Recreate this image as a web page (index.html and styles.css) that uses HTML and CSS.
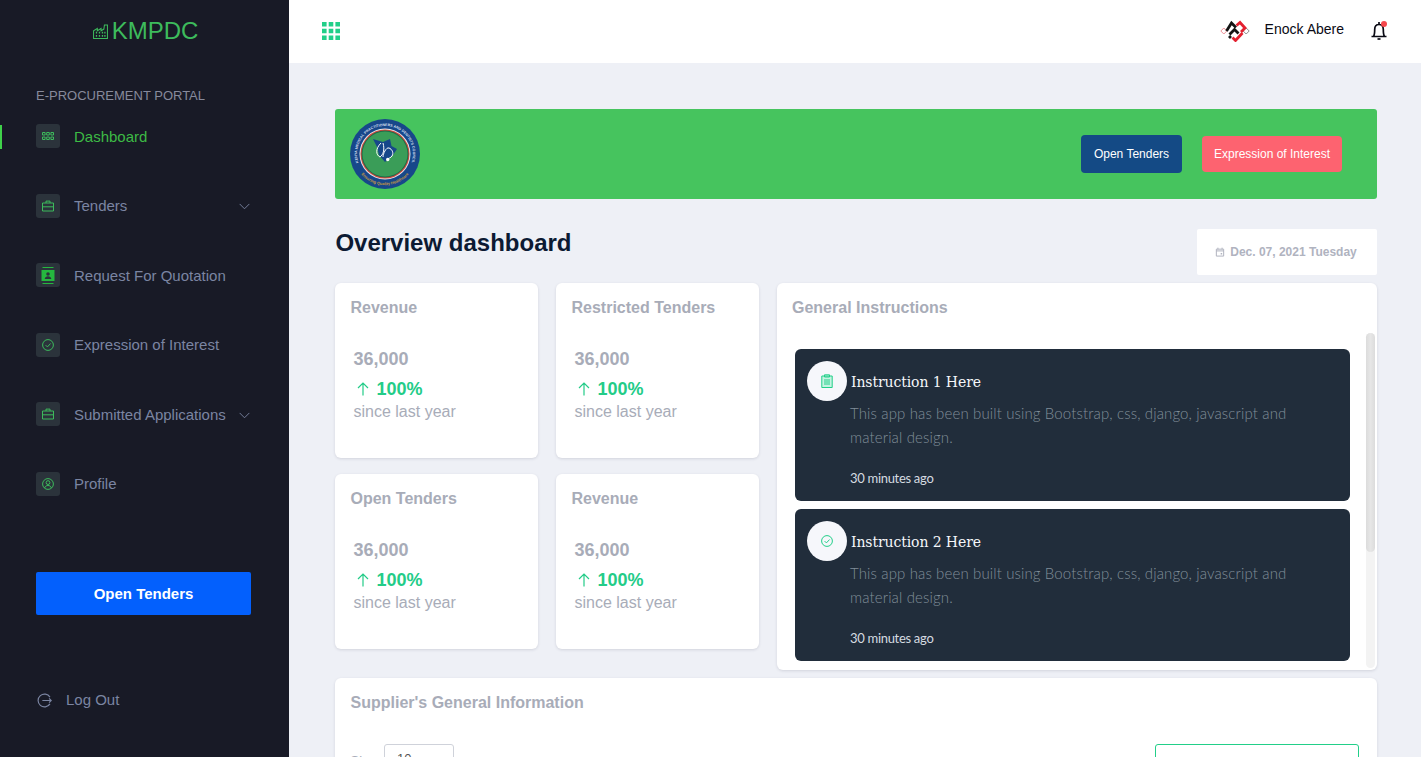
FILE: index.html
```html
<!DOCTYPE html>
<html lang="en">
<head>
<meta charset="utf-8">
<title>KMPDC Dashboard</title>
<link rel="stylesheet" href="styles.css">
</head>
<body>
<div class="app">
  <aside class="sidebar">
    <div class="brand">
      <svg class="brand-icon" viewBox="0 0 16 16" fill="none" stroke="currentColor" stroke-width="1.1"><path d="M.6 15.4V7.2l4-2.4v2.4l4-2.4v2.4l3-1.8.6-4.4h3.2v14.4z"/><path d="M3 9.2h1.4M6.2 9.2h1.4M9.400 9.2h1.4M12 9.2h1.4M3 12.600h1.4M6.2 12.600h1.4M9.400 12.600h1.4M12 12.600h1.4" stroke-width="1.8"/></svg>
      <span>KMPDC</span>
    </div>
    <div class="portal">E-PROCUREMENT PORTAL</div>
    <nav class="nav">
      <a class="nav-item active"><span class="nav-icon"><svg class="ico-dash" viewBox="0 0 12 8" fill="none" stroke="currentColor"><path d="M.5.5h2.600v2.500H.5zM4.700.5h2.600v2.500H4.700zM8.900.5h2.600v2.500H8.900zM.5 5h2.600v2.500H.5zM4.700 5h2.600v2.500H4.700zM8.900 5h2.600v2.500H8.900z"/></svg></span><span class="nav-label">Dashboard</span></a>
      <a class="nav-item"><span class="nav-icon"><svg viewBox="0 0 12 11" fill="none" stroke="currentColor"><path d="M.5 2.500h11v8H.5zM4 2.500V.6h4v1.900M.5 6.300h11"/></svg></span><span class="nav-label">Tenders</span><svg class="chev" viewBox="0 0 12 7" fill="none" stroke="currentColor"><path d="M.7.7 6 6l5.300-5.300"/></svg></a>
      <a class="nav-item"><span class="nav-icon nav-icon-solid"><svg class="ico-rfq" viewBox="0 0 14 17" fill="currentColor"><path d="M1.500 0h11v1h-11zM1.500 16h11v1h-11zM.5 3h13v11H.5z"/><circle cx="7" cy="7" r="1.800" fill="#2b333b"/><path d="M3.700 12c.3-2 1.500-2.800 3.300-2.800s3 .8 3.300 2.800z" fill="#2b333b"/></svg></span><span class="nav-label">Request For Quotation</span></a>
      <a class="nav-item"><span class="nav-icon"><svg viewBox="0 0 12 12" fill="none" stroke="currentColor"><circle cx="6" cy="6" r="5.400"/><path d="M3.600 6.100 5.400 7.900l3.200-3.400"/></svg></span><span class="nav-label">Expression of Interest</span></a>
      <a class="nav-item"><span class="nav-icon"><svg viewBox="0 0 12 11" fill="none" stroke="currentColor"><path d="M.5 2.500h11v8H.5zM4 2.500V.6h4v1.900M.5 6.300h11"/></svg></span><span class="nav-label">Submitted Applications</span><svg class="chev" viewBox="0 0 12 7" fill="none" stroke="currentColor"><path d="M.7.7 6 6l5.300-5.300"/></svg></a>
      <a class="nav-item"><span class="nav-icon"><svg viewBox="0 0 12 12" fill="none" stroke="currentColor"><circle cx="6" cy="6" r="5.400"/><circle cx="6" cy="4.600" r="1.900"/><path d="M2.600 10c.5-1.700 1.800-2.500 3.400-2.500s2.900.8 3.400 2.500"/></svg></span><span class="nav-label">Profile</span></a>
    </nav>
    <a class="side-btn">Open Tenders</a>
    <a class="logout"><svg viewBox="0 0 14 14" fill="none" stroke="currentColor" stroke-width="1.100"><path d="M12.100 3.800a6 6 0 1 0 0 6.400"/><path d="M5 7h8.300M11.300 5l2 2-2 2"/></svg><span>Log Out</span></a>
  </aside>

  <main class="main">
    <header class="topbar">
      <svg class="grid-icon" viewBox="0 0 18 18" fill="#22cf89"><path d="M0 0h4.600v4.600H0zM6.700 0h4.600v4.600H6.700zM13.400 0H18v4.600h-4.600zM0 6.700h4.600v4.600H0zM6.700 6.700h4.600v4.600H6.700zM13.400 6.700H18v4.600h-4.600zM0 13.400h4.600V18H0zM6.700 13.400h4.600V18H6.700zM13.400 13.400H18V18h-4.600z"/></svg>
      <div class="user">
        <svg class="user-logo" viewBox="0 0 30 22" fill="none">
          <path d="M.8 11l3-3 3 3-3 3z" stroke="#ee8f96" stroke-width="1"/>
          <path d="M23.200 11l3-3 3 3-3 3z" stroke="#8a8a8a" stroke-width="1"/>
          <path d="M6.500 11 11.500 3l4.500 4.500M9.500 14.500l5-5 4 4M9 18l2-2" stroke="#141414" stroke-width="2.800"/>
          <path d="M16.500 5.500l3.500-3 5 5.500-4 4M12.500 17.500l3 3 7-7.500" stroke="#e3202f" stroke-width="2.800"/>
        </svg>
        <span class="user-name">Enock Abere</span>
        <span class="bell"><svg viewBox="0 0 16 19" fill="none" stroke="#0a0a14" stroke-width="1.700"><path d="M.5 15.500h15M2.500 15.500c1-1.500 1.200-3.500 1.200-7C3.700 5.500 5.500 3.500 8 3.500s4.300 2 4.300 5c0 3.500.2 5.500 1.200 7M8 1v2.500"/><path d="M6.500 18h3"/></svg><i class="bell-dot"></i></span>
      </div>
    </header>

    <div class="content">
      <section class="banner">
        <svg class="seal" viewBox="0 0 70 70">
          <defs>
            <path id="sealTop" d="M9 45a27.900 27.900 0 1 1 52 0"/>
            <path id="sealBottom" d="M9.500 53a31.200 31.200 0 0 0 51 0"/>
          </defs>
          <circle cx="35" cy="35" r="35" fill="#17478a"/>
          <text class="seal-top"><textPath href="#sealTop" startOffset="50%" text-anchor="middle">KENYA MEDICAL PRACTITIONERS AND DENTISTS COUNCIL</textPath></text>
          <text class="seal-bottom"><textPath href="#sealBottom" startOffset="50%" text-anchor="middle">Ensuring Quality Healthcare</textPath></text>
          <circle cx="35" cy="35" r="25.500" fill="#e5ecec"/>
          <circle cx="35" cy="35" r="24.500" fill="#d1463f"/>
          <circle cx="35" cy="35" r="23.500" fill="#1f6c49"/>
          <circle cx="35" cy="35" r="22.500" fill="#3a9d58"/>
          <path d="M23 20l10 3 7-3 1.500 7 5.500 3-4 6-8 7-6-7-2-8z" fill="#17478a"/>
          <path d="M31 24c-6 6-5 12-1 14 3-2 5-7 3-14M33 38c0-3 3-10 6-9s5 5 3 8c-1 2-4 2-4 3" fill="none" stroke="#fff" stroke-width="1"/>
          <circle cx="37.700" cy="40.500" r="1.700" fill="#fff"/>
        </svg>
        <div class="banner-actions">
          <a class="btn btn-navy">Open Tenders</a>
          <a class="btn btn-coral">Expression of Interest</a>
        </div>
      </section>

      <div class="title-row">
        <h1>Overview dashboard</h1>
        <div class="date"><svg viewBox="0 0 12 12" fill="none" stroke="currentColor" stroke-width="1.200"><path d="M1.600 2.600h8.800v8.300H1.600zM1.600 4.700h8.800M3.500.8v2M8.500.8v2"/><path d="M6.800 7.200h1.800v1.800H6.800z" fill="currentColor" stroke="none"/></svg><span>Dec. 07, 2021 Tuesday</span></div>
      </div>

      <div class="dash-grid">
        <div class="stats">
          <article class="card stat"><h2>Revenue</h2><div class="stat-body"><div class="num">36,000</div><div class="pct"><svg viewBox="0 0 12 14" fill="none" stroke="currentColor" stroke-width="1.200"><path d="M6 13.500V1M1 6l5-5 5 5"/></svg>100%</div><div class="since">since last year</div></div></article>
          <article class="card stat"><h2>Restricted Tenders</h2><div class="stat-body"><div class="num">36,000</div><div class="pct"><svg viewBox="0 0 12 14" fill="none" stroke="currentColor" stroke-width="1.200"><path d="M6 13.500V1M1 6l5-5 5 5"/></svg>100%</div><div class="since">since last year</div></div></article>
          <article class="card stat"><h2>Open Tenders</h2><div class="stat-body"><div class="num">36,000</div><div class="pct"><svg viewBox="0 0 12 14" fill="none" stroke="currentColor" stroke-width="1.200"><path d="M6 13.500V1M1 6l5-5 5 5"/></svg>100%</div><div class="since">since last year</div></div></article>
          <article class="card stat"><h2>Revenue</h2><div class="stat-body"><div class="num">36,000</div><div class="pct"><svg viewBox="0 0 12 14" fill="none" stroke="currentColor" stroke-width="1.200"><path d="M6 13.500V1M1 6l5-5 5 5"/></svg>100%</div><div class="since">since last year</div></div></article>
        </div>

        <article class="card instructions">
          <h2>General Instructions</h2>
          <div class="instr-body">
            <div class="scroller">
              <div class="note">
                <span class="note-badge"><svg viewBox="0 0 12 14" fill="#c6f3e2" stroke="#22cf89" stroke-width="1"><path d="M.8 2h10.400v11.500H.8z"/><path d="M3.500.8h5v2.200h-5zM3 6h6M3 8h6M3 10h6" fill="none"/></svg></span>
                <div class="note-body">
                  <h3>Instruction 1 Here</h3>
                  <p>This app has been built using Bootstrap, css, django, javascript and material design.</p>
                  <time>30 minutes ago</time>
                </div>
              </div>
              <div class="note">
                <span class="note-badge"><svg viewBox="0 0 12 12" fill="none" stroke="#22cf89"><circle cx="6" cy="6" r="5.400"/><path d="M3.600 6.100 5.400 7.900l3.200-3.400"/></svg></span>
                <div class="note-body">
                  <h3>Instruction 2 Here</h3>
                  <p>This app has been built using Bootstrap, css, django, javascript and material design.</p>
                  <time>30 minutes ago</time>
                </div>
              </div>
            </div>
            <div class="rail"><div class="thumb"></div></div>
          </div>
        </article>
      </div>

      <article class="card supplier">
        <h2>Supplier's General Information</h2>
        <div class="table-tools">
          <div class="length"><span class="length-label">Show</span><span class="select">10</span></div>
          <div class="search"></div>
        </div>
      </article>
    </div>
  </main>
</div>
</body>
</html>
```
FILE: styles.css
```css
* { box-sizing: border-box; }
html, body { height: 100%; }
body { margin: 0; overflow: hidden; background: #eef0f6; font-family: "Liberation Sans", Arial, sans-serif; color: #0c1a33; }
a { display: block; }
.app { display: flex; height: 757px; overflow: hidden; }

.sidebar { width: 289px; flex: none; background: #181a26; display: flex; flex-direction: column; }
.brand { height: 61px; margin-bottom: 2px; display: flex; align-items: center; justify-content: center; gap: 4px; color: #3dbb5c; font-size: 24px; padding-left: 2px; }
.brand-icon { width: 15px; height: 15px; margin-top: 2px; }
.portal { margin: 25px 0 0 36px; font-size: 13px; line-height: 16px; color: #878a9c; }
.nav { margin-top: 12.5px; }
.nav-item { height: 69.5px; padding: 8px 0 0 36px; display: flex; align-items: flex-start; color: #7b85a2; font-size: 15px; line-height: 24px; position: relative; }
.nav-item.active { color: #3dbb45; }
.nav-item.active::before { content: ""; position: absolute; left: 0; top: 8px; width: 2px; height: 24px; background: #3fd14a; }
.nav-icon { width: 24px; height: 24px; margin-top: -0.5px; border-radius: 3px; background: #2b333b; color: #3dbb5c; display: flex; align-items: center; justify-content: center; margin-right: 14px; flex: none; }
.nav-icon svg { width: 12px; height: 12px; }
.nav-icon .ico-dash { width: 12px; height: 8px; margin-top: -1px; }
.nav-icon-solid { color: #25b83f; }
.nav-icon .ico-rfq { width: 14px; height: 17px; }
.nav-label { flex: none; }
.chev { position: absolute; left: 239px; top: 17px; width: 11px; height: 7px; color: #7b85a2; }
.side-btn { margin: 38.5px 0 0 36px; width: 215px; height: 43px; border-radius: 2px; background: #0360fd; color: #fff; font-weight: 700; font-size: 15px; line-height: 43px; text-align: center; }
.logout { margin: 75px 0 0 37px; display: flex; align-items: center; gap: 14px; color: #7b85a2; font-size: 15px; line-height: 20px; }
.logout svg { width: 15px; height: 15px; }

.main { flex: 1; min-width: 0; display: flex; flex-direction: column; }
.topbar { height: 63px; background: #fff; flex: none; display: flex; align-items: center; justify-content: space-between; padding: 0 34px 0 33px; }
.grid-icon { width: 18px; height: 18px; margin-bottom: 2px; }
.user { display: flex; align-items: center; margin-bottom: 2px; }
.user-logo { width: 30px; height: 22px; }
.user-name { margin-left: 15px; font-size: 14px; color: #0a0a14; margin-bottom: 4px; }
.bell { position: relative; margin-left: 27px; width: 16px; height: 19px; }
.bell svg { width: 16px; height: 19px; display: block; }
.bell-dot { position: absolute; right: 0; top: 0; width: 6px; height: 6px; border-radius: 50%; background: #f5484d; }

.content { padding: 46px 44px 0 46px; }
.banner { height: 90px; background: #46c45e; border-radius: 3px; display: flex; align-items: center; justify-content: space-between; padding: 0 35px 0 15px; }
.seal { width: 70px; height: 70px; }
.seal-top { font-size: 3.6px; font-weight: 700; fill: #d5dfee; }
.seal-bottom { font-size: 4px; font-weight: 700; fill: #c79a3f; }
.banner-actions { display: flex; gap: 20px; }
.btn { height: 38px; border-radius: 4px; color: #fff; font-size: 12px; line-height: 38px; text-align: center; }
.btn-navy { width: 101px; background: #144a85; }
.btn-coral { width: 140px; background: #fd6370; height: 36px; line-height: 36px; margin-top: 1px; }

.title-row { height: 84px; display: flex; justify-content: space-between; padding-top: 30px; }
.title-row h1 { margin: 0 0 0 0.4px; font-size: 24px; line-height: 28px; font-weight: 700; color: #0c1a33; }
.date { width: 180px; height: 46px; background: #fff; border-radius: 2px; display: flex; align-items: center; justify-content: center; gap: 5px; padding-right: 2px; font-size: 12px; font-weight: 700; color: #b0b3bf; }
.date svg { width: 10px; height: 10px; }

.dash-grid { display: flex; gap: 18px; }
.stats { width: 424px; flex: none; display: grid; grid-template-columns: 203px 203px; grid-template-rows: 175px 175px; gap: 16px 18px; }
.card { background: #fff; border-radius: 6px; box-shadow: 0 1px 3px rgba(40, 45, 70, 0.14); }
.card h2 { margin: 0; font-size: 16px; line-height: 20px; font-weight: 700; color: #a8acb8; }
.stat { padding: 15px 15px 0 15.5px; }
.stat-body { margin: 29px 0 0 3px; }
.num { font-size: 18px; line-height: 24px; font-weight: 700; color: #a8acb8; }
.pct { font-size: 18px; line-height: 24px; font-weight: 700; color: #23cc88; margin-top: 6px; display: flex; align-items: center; }
.pct svg { width: 12px; height: 14px; margin: 0 8px 0 3px; }
.since { font-size: 16px; line-height: 22px; color: #a8acb8; }

.instructions { flex: 1; min-width: 0; height: 387px; padding: 15px 2px 2px 15px; display: flex; flex-direction: column; }
.instr-body { margin-top: 15px; flex: 1; min-height: 0; display: flex; }
.scroller { flex: 1; min-width: 0; overflow: hidden; padding: 16px 16px 0 3px; }
.rail { width: 9px; flex: none; background: #f3f3f3; border-radius: 5px; }
.thumb { height: 219px; border-radius: 5px; background: linear-gradient(90deg, #dcdcdc, #e6e6e6 50%, #dcdcdc); }
.note { height: 152px; margin-bottom: 8px; background: #212d3b; border-radius: 6px; padding: 12px 12px 0 12px; display: flex; gap: 4px; }
.note-badge { flex: none; width: 40px; height: 40px; border-radius: 50%; background: #f6f7fb; display: flex; align-items: center; justify-content: center; }
.note-badge svg { width: 12px; height: 14px; }
.note-body { min-width: 0; }
.note h3 { margin: 10px 0 0 0; font-family: "DejaVu Serif", "Liberation Serif", serif; font-weight: 400; font-size: 14px; line-height: 22px; letter-spacing: -0.1px; color: #f5f7fa; }
.note p { margin: 8px 40px 0 -1px; font-family: "Lato", sans-serif; font-weight: 300; font-size: 15px; line-height: 24px; letter-spacing: 0.13px; color: #808d99; }
.note time { display: block; margin: 19px 0 0 -1px; font-family: "Lato", sans-serif; font-size: 13px; line-height: 20px; letter-spacing: -0.3px; color: #d5dbe0; }

.supplier { margin-top: 8px; height: 200px; padding: 15px 18px 0 15.5px; }
.table-tools { display: flex; justify-content: space-between; align-items: flex-start; margin-top: 31px; }
.length { display: flex; gap: 1px; align-items: flex-start; }
.length-label { font-size: 13px; line-height: 34px; color: #a8acb8; }
.select { width: 70px; height: 38px; border: 1px solid #cfd2da; border-radius: 3px; padding: 6px 12px; font-size: 13px; color: #555; }
.search { width: 204px; height: 40px; border: 1px solid #22cf89; border-radius: 3px; }
```
